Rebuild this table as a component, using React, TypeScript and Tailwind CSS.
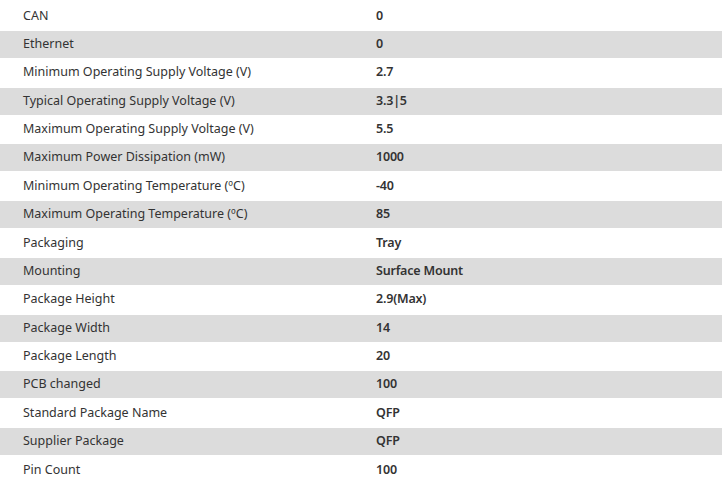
const rows: [string, string][] = [
  ["CAN", "0"],
  ["Ethernet", "0"],
  ["Minimum Operating Supply Voltage (V)", "2.7"],
  ["Typical Operating Supply Voltage (V)", "3.3|5"],
  ["Maximum Operating Supply Voltage (V)", "5.5"],
  ["Maximum Power Dissipation (mW)", "1000"],
  ["Minimum Operating Temperature (ºC)", "-40"],
  ["Maximum Operating Temperature (ºC)", "85"],
  ["Packaging", "Tray"],
  ["Mounting", "Surface Mount"],
  ["Package Height", "2.9(Max)"],
  ["Package Width", "14"],
  ["Package Length", "20"],
  ["PCB changed", "100"],
  ["Standard Package Name", "QFP"],
  ["Supplier Package", "QFP"],
  ["Pin Count", "100"],
];

export default function App() {
  return (
    <div className="h-[478px] w-[722px] overflow-hidden bg-white font-['Noto_Sans',sans-serif] text-[12.5px] text-[#333]">
      <div className="flex flex-col gap-[1.375px] pt-[2.4px]">
        {rows.map(([label, value], i) => (
          <div
            key={label}
            className={`grid h-[27px] shrink-0 grid-cols-[376px_1fr] items-center ${i % 2 === 1 ? "bg-[#dcdcdc]" : "bg-white"}`}
          >
            <span className="pl-[23px]">{label}</span>
            <span className="font-semibold tracking-[-0.2px]">{value}</span>
          </div>
        ))}
      </div>
    </div>
  );
}
